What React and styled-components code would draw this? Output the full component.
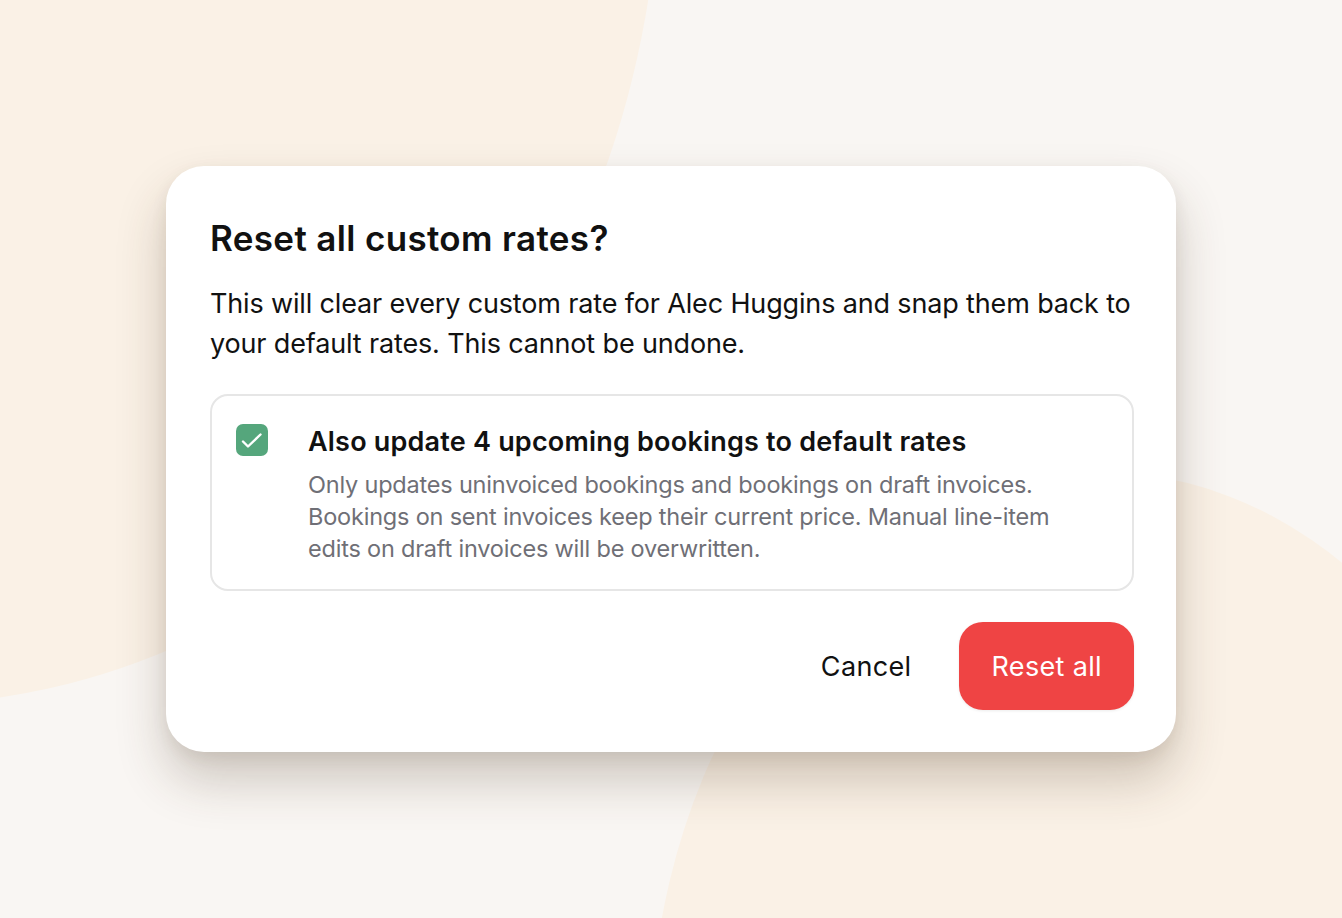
import React from "react";
import styled, { createGlobalStyle } from "styled-components";

const Global = createGlobalStyle`
  html, body { margin: 0; padding: 0; }
  body {
    font-family: "Inter", "Noto Sans", sans-serif;
    background: #f9f6f3;
    -webkit-font-smoothing: antialiased;
  }
  * { box-sizing: border-box; }
`;

const Page = styled.div`
  position: relative;
  width: 1342px;
  height: 918px;
  overflow: hidden;
  background: #f9f6f3;
  display: flex;
  align-items: flex-start;
  justify-content: center;
  padding-top: 166px;
`;

const Blob = styled.div`
  position: absolute;
  border-radius: 50%;
  background: #faf1e6;
  left: ${(p) => p.$cx - p.$rx}px;
  top: ${(p) => p.$cy - p.$ry}px;
  width: ${(p) => p.$rx * 2}px;
  height: ${(p) => p.$ry * 2}px;
`;

const Dialog = styled.div`
  position: relative;
  z-index: 1;
  width: 1010px;
  background: #ffffff;
  border-radius: 38px;
  padding: 50px 42px 42px 44px;
  box-shadow: 0 28px 50px rgba(70, 50, 30, 0.24), 0 6px 16px rgba(70, 50, 30, 0.08);
  display: flex;
  flex-direction: column;
`;

const Title = styled.h2`
  margin: 0;
  font-size: 35px;
  line-height: 44px;
  font-weight: 600;
  color: #111111;
  letter-spacing: 0.35px;
`;

const Body = styled.p`
  margin: 24px 0 0;
  font-size: 27px;
  line-height: 40px;
  font-weight: 400;
  color: #111111;
  letter-spacing: -0.15px;
`;

const Option = styled.label`
  margin-top: 30px;
  border: 2px solid #e6e6e6;
  border-radius: 18px;
  padding: 29px 24px 24px 24px;
  display: flex;
  align-items: flex-start;
  gap: 40px;
  cursor: pointer;
`;

const Check = styled.span`
  flex: none;
  width: 32px;
  height: 32px;
  border-radius: 7px;
  background: #55a67c;
  display: flex;
  align-items: center;
  justify-content: center;
  margin-top: -1px;
`;

const OptionText = styled.div`
  display: flex;
  flex-direction: column;
  gap: 10px;
`;

const OptionTitle = styled.div`
  font-size: 27px;
  line-height: 34px;
  font-weight: 600;
  color: #111111;
  letter-spacing: 0.2px;
`;

const OptionDesc = styled.div`
  font-size: 23.5px;
  line-height: 32px;
  font-weight: 400;
  color: #6f6f76;
  letter-spacing: -0.2px;
`;

const Actions = styled.div`
  margin-top: 31px;
  display: flex;
  justify-content: flex-end;
  align-items: center;
  gap: 24px;
`;

const Button = styled.button`
  font-family: inherit;
  font-size: 27px;
  font-weight: 400;
  height: 88px;
  border: none;
  border-radius: 24px;
  padding: 0 ${(p) => (p.$danger ? "32px" : "24px")};
  background: ${(p) => (p.$danger ? "#ef4444" : "transparent")};
  color: ${(p) => (p.$danger ? "#ffffff" : "#111111")};
  letter-spacing: 0.35px;
  cursor: pointer;
  box-shadow: ${(p) => (p.$danger ? "0 1px 3px rgba(0,0,0,0.08)" : "none")};
`;

export default function App() {
  return (
    <>
      <Global />
      <Page>
        <Blob $cx={-100} $cy={-150} $rx={760} $ry={855} />
        <Blob $cx={1100} $cy={1050} $rx={450} $ry={578} />
        <Dialog>
          <Title>Reset all custom rates?</Title>
          <Body>
            This will clear every custom rate for Alec Huggins and snap them back to
            <br />
            your default rates. This cannot be undone.
          </Body>
          <Option>
            <Check>
              <svg width="32" height="32" viewBox="0 0 32 32" fill="none">
                <path
                  d="M7 17.5 L12 22.5 L24.5 10.5"
                  stroke="#ffffff"
                  strokeWidth="2.4"
                  strokeLinecap="round"
                  strokeLinejoin="round"
                />
              </svg>
            </Check>
            <OptionText>
              <OptionTitle>Also update 4 upcoming bookings to default rates</OptionTitle>
              <OptionDesc>
                Only updates uninvoiced bookings and bookings on draft invoices.
                <br />
                Bookings on sent invoices keep their current price. Manual line-item
                <br />
                edits on draft invoices will be overwritten.
              </OptionDesc>
            </OptionText>
          </Option>
          <Actions>
            <Button>Cancel</Button>
            <Button $danger>Reset all</Button>
          </Actions>
        </Dialog>
      </Page>
    </>
  );
}
